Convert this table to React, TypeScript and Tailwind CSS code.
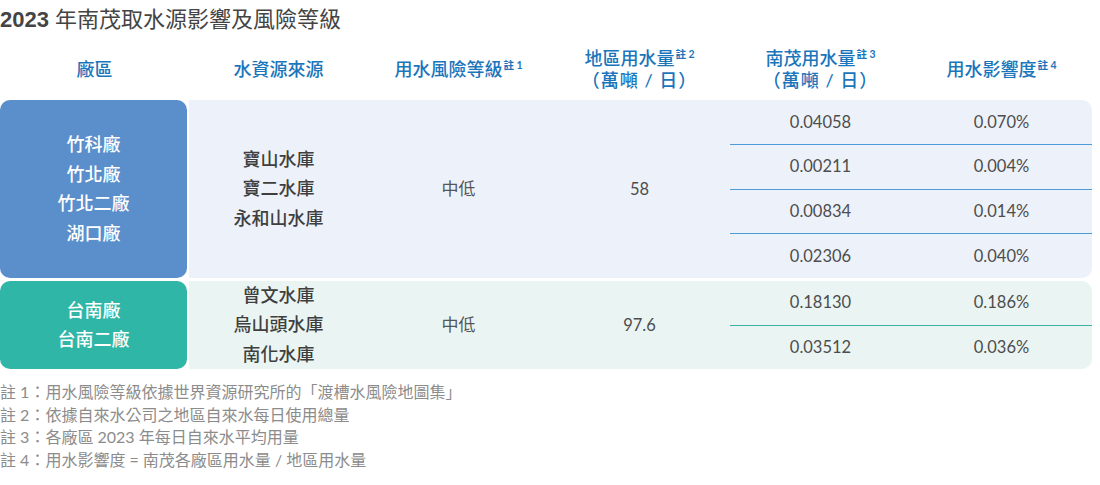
import React from "react";

interface SubRow {
  usage: string;
  impact: string;
}

interface Group {
  plants: string[];
  sources: string[];
  risk: string;
  regional: string;
  rows: SubRow[];
  height: string;
  tone: "blue" | "teal";
}

const groups: Group[] = [
  {
    plants: ["竹科廠", "竹北廠", "竹北二廠", "湖口廠"],
    sources: ["寶山水庫", "寶二水庫", "永和山水庫"],
    risk: "中低",
    regional: "58",
    rows: [
      { usage: "0.04058", impact: "0.070%" },
      { usage: "0.00211", impact: "0.004%" },
      { usage: "0.00834", impact: "0.014%" },
      { usage: "0.02306", impact: "0.040%" },
    ],
    height: "h-[178px]",
    tone: "blue",
  },
  {
    plants: ["台南廠", "台南二廠"],
    sources: ["曾文水庫", "烏山頭水庫", "南化水庫"],
    risk: "中低",
    regional: "97.6",
    rows: [
      { usage: "0.18130", impact: "0.186%" },
      { usage: "0.03512", impact: "0.036%" },
    ],
    height: "h-[88px]",
    tone: "teal",
  },
];

const notes = [
  "註 1：用水風險等級依據世界資源研究所的「渡槽水風險地圖集」",
  "註 2：依據自來水公司之地區自來水每日使用總量",
  "註 3：各廠區 2023 年每日自來水平均用量",
  "註 4：用水影響度 = 南茂各廠區用水量 / 地區用水量",
];

const Note = ({ n }: { n: number }) => (
  <span className="relative -top-[7px] ml-[1px] text-[10.5px] font-bold leading-none">
    註 {n}
  </span>
);

const GroupRow = ({ g }: { g: Group }) => {
  const blue = g.tone === "blue";
  return (
    <div className={`flex ${g.height}`}>
      <div
        className={`flex w-[187px] flex-col items-center justify-center rounded-[10px] text-[18px] font-medium leading-[29.5px] text-white ${
          blue ? "bg-[#5b8fcc]" : "bg-[#2fb6a6]"
        }`}
      >
        {g.plants.map((p) => (
          <div key={p}>{p}</div>
        ))}
      </div>
      <div
        className={`ml-[2px] flex flex-1 rounded-r-[10px] ${
          blue ? "bg-[#edf2fa]" : "bg-[#eaf5f3]"
        }`}
      >
        <div className="flex w-[179px] flex-col items-center justify-center text-[18px] font-medium leading-[29.5px] text-[#3f3f3f]">
          {g.sources.map((s) => (
            <div key={s}>{s}</div>
          ))}
        </div>
        <div className="flex w-[181px] items-center justify-center text-[17px] text-[#555]">
          {g.risk}
        </div>
        <div className="flex w-[181px] items-center justify-center text-[16.5px] text-[#4d4d4d]">
          {g.regional}
        </div>
        <div className="flex flex-1 flex-col">
          {g.rows.map((r, i) => (
            <div
              key={i}
              className={`grid flex-1 grid-cols-2 items-center text-center text-[16.5px] text-[#4d4d4d] ${
                i > 0 ? (blue ? "border-t border-[#4f9bd8]" : "border-t border-[#35b3a4]") : ""
              }`}
            >
              <div>{r.usage}</div>
              <div>{r.impact}</div>
            </div>
          ))}
        </div>
      </div>
    </div>
  );
};

export default function App() {
  return (
    <div className="h-[485px] w-[1100px] bg-white font-['Lato','Noto_Sans_CJK_TC',sans-serif]">
      <h1 className="pt-[8px] font-['Liberation_Sans','Noto_Sans_CJK_TC',sans-serif] text-[22px] leading-[24px] text-[#444]">
        <span className="font-bold">2023</span> 年南茂取水源影響及風險等級
      </h1>

      <div className="mt-[8px] grid h-[58px] w-[1092px] grid-cols-[189px_179px_181px_181px_181px_181px] items-center text-center text-[18px] font-medium leading-[22px] text-[#1b75bb]">
        <div>廠區</div>
        <div>水資源來源</div>
        <div>
          用水風險等級
          <Note n={1} />
        </div>
        <div>
          <div>
            地區用水量
            <Note n={2} />
          </div>
          <div className="tracking-[1px]">（萬噸 / 日）</div>
        </div>
        <div>
          <div>
            南茂用水量
            <Note n={3} />
          </div>
          <div className="tracking-[1px]">（萬噸 / 日）</div>
        </div>
        <div>
          用水影響度
          <Note n={4} />
        </div>
      </div>

      <div className="mt-[2px] flex w-[1092px] flex-col gap-[3px]">
        {groups.map((g, i) => (
          <GroupRow key={i} g={g} />
        ))}
      </div>

      <div className="mt-[12px] text-[16px] leading-[22.7px] text-[#8c8c8c]">
        {notes.map((n) => (
          <div key={n}>{n}</div>
        ))}
      </div>
    </div>
  );
}
